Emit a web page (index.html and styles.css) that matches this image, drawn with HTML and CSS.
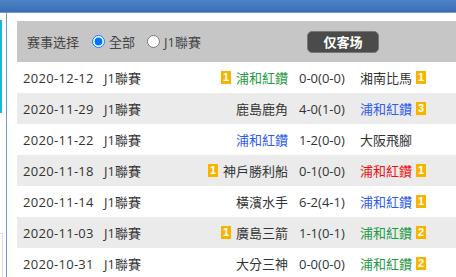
FILE: index.html
```html
<!DOCTYPE html>
<html lang="zh-Hant">
<head>
<meta charset="utf-8">
<link rel="stylesheet" href="styles.css">
</head>
<body>
<div class="topbar"></div>
<div class="layout">
  <div class="sidebar">
    <div class="cyan"></div>
    <div class="spacer"></div>
    <div class="graybox"></div>
  </div>
  <div class="main">
    <div class="filter">
      <span class="label">赛事选择</span>
      <label class="opt"><input type="radio" name="m" checked>全部</label>
      <label class="opt"><input type="radio" name="m">J1聯賽</label>
      <button class="btn">仅客场</button>
    </div>
    <div class="rows">
      <div class="row">
        <span class="date">2020-12-12</span><span class="lg">J1聯賽</span>
        <span class="home"><i class="bd">1</i><span class="green">浦和紅鑽</span></span>
        <span class="score">0-0(0-0)</span>
        <span class="away">湘南比馬<i class="bd">1</i></span>
      </div>
      <div class="row alt">
        <span class="date">2020-11-29</span><span class="lg">J1聯賽</span>
        <span class="home">鹿島鹿角</span>
        <span class="score">4-0(1-0)</span>
        <span class="away"><span class="blue">浦和紅鑽</span><i class="bd">3</i></span>
      </div>
      <div class="row">
        <span class="date">2020-11-22</span><span class="lg">J1聯賽</span>
        <span class="home"><span class="blue">浦和紅鑽</span></span>
        <span class="score">1-2(0-0)</span>
        <span class="away">大阪飛腳</span>
      </div>
      <div class="row alt">
        <span class="date">2020-11-18</span><span class="lg">J1聯賽</span>
        <span class="home"><i class="bd">1</i>神戶勝利船</span>
        <span class="score">0-1(0-0)</span>
        <span class="away"><span class="red">浦和紅鑽</span><i class="bd">1</i></span>
      </div>
      <div class="row">
        <span class="date">2020-11-14</span><span class="lg">J1聯賽</span>
        <span class="home">橫濱水手</span>
        <span class="score">6-2(4-1)</span>
        <span class="away"><span class="blue">浦和紅鑽</span><i class="bd">1</i></span>
      </div>
      <div class="row alt">
        <span class="date">2020-11-03</span><span class="lg">J1聯賽</span>
        <span class="home"><i class="bd">1</i>廣島三箭</span>
        <span class="score">1-1(0-1)</span>
        <span class="away"><span class="green">浦和紅鑽</span><i class="bd">2</i></span>
      </div>
      <div class="row">
        <span class="date">2020-10-31</span><span class="lg">J1聯賽</span>
        <span class="home">大分三神</span>
        <span class="score">0-0(0-0)</span>
        <span class="away"><span class="green">浦和紅鑽</span><i class="bd">2</i></span>
      </div>
    </div>
  </div>
</div>
</body>
</html>
```
FILE: styles.css
```css
html, body {
  margin: 0;
  padding: 0;
  background: #fff;
  overflow: hidden;
}
body {
  width: 456px;
  height: 277px;
  font-family: "Open Sans", "Noto Sans CJK TC", sans-serif;
  font-size: 13px;
  color: #333;
}
.topbar {
  height: 12px;
  background: linear-gradient(#4d84c6, #3b6db4);
  border-bottom: 1px solid #6f97cf;
}
.layout {
  display: flex;
  height: 264px;
}
.sidebar {
  width: 6px;
  border-right: 1px solid #6b9bd3;
  display: flex;
  flex-direction: column;
  flex-shrink: 0;
}
.cyan {
  margin-top: 7px;
  width: 2px;
  height: 93px;
  background: #19b6d8;
}
.spacer {
  flex: 1;
}
.graybox {
  height: 44px;
  width: 3px;
  border-top: 1px solid #ddd;
  border-right: 1px solid #ddd;
  box-sizing: border-box;
}
.main {
  margin-left: 10px;
  margin-top: 8px;
  flex: 1;
}
.filter {
  height: 41px;
  background: #c6c6c6;
  display: flex;
  align-items: center;
  padding-left: 10px;
  color: #444;
}
.label {
  margin-right: 10px;
}
.opt {
  display: flex;
  align-items: center;
  margin-right: 9px;
}
.opt input {
  margin: 0 4px 0 3px;
  width: 13px;
  height: 13px;
}
.btn {
  margin-left: 97px;
  width: 72px;
  height: 22px;
  background: #4b4b4b;
  border: 1px solid #777;
  border-radius: 5px;
  color: #fff;
  font-family: "Noto Sans CJK SC", sans-serif;
  font-size: 13px;
  font-weight: bold;
  padding: 0;
  line-height: 18px;
}
.row {
  height: 31px;
  display: grid;
  grid-template-columns: 81px 50px 134px 61px 1fr;
  align-items: center;
  padding-left: 6px;
  line-height: 16px;
  white-space: nowrap;
}
.alt {
  background: #ebebeb;
}
.date {
  letter-spacing: 0.3px;
}
.home {
  display: flex;
  justify-content: flex-end;
  align-items: center;
}
.score {
  padding-left: 11px;
}
.away {
  padding-left: 11px;
  display: flex;
  align-items: center;
}
.bd {
  font-style: normal;
  display: inline-block;
  width: 10px;
  height: 13px;
  line-height: 13px;
  background: #f6b400;
  color: #fff;
  font-size: 11px;
  font-weight: bold;
  text-align: center;
  font-family: "Liberation Sans", sans-serif;
}
.home .bd {
  margin-right: 5px;
}
.away .bd {
  margin-left: 4px;
}
.green { color: #1f9a45; }
.blue { color: #2f5cf0; }
.red { color: #f01010; }
```
